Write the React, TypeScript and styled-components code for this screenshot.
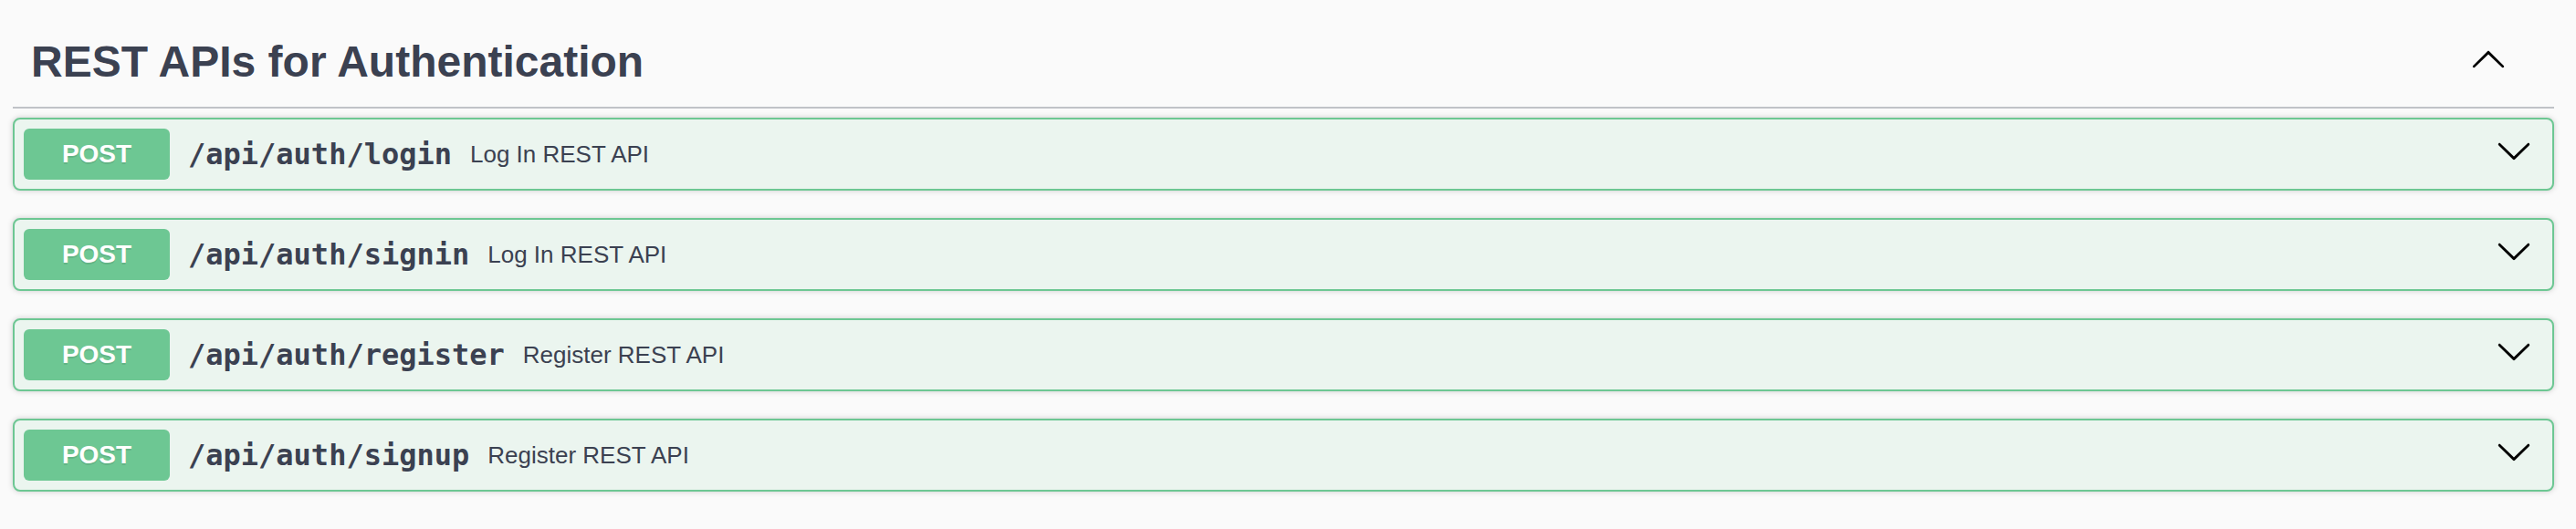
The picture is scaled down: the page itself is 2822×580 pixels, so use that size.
import React from 'react';
import styled, { createGlobalStyle } from 'styled-components';

const GlobalStyle = createGlobalStyle`
  body {
    margin: 0;
    background: #fafafa;
  }
`;

const Page = styled.div`
  padding: 20px 24px 0 14px;
`;

const TagHeader = styled.div`
  display: flex;
  align-items: center;
  padding: 20px 40px 22px 20px;
  border-bottom: 2px solid #c0c2c7;
  margin-bottom: 10px;
`;

const TagTitle = styled.h3`
  flex: 1;
  margin: 0;
  font-family: "Liberation Sans", Arial, sans-serif;
  font-size: 48px;
  font-weight: 700;
  line-height: normal;
  color: #3b4151;
`;

const ExpandButton = styled.button`
  display: flex;
  padding: 0;
  margin: 0 12px 7px 0;
  border: none;
  background: none;
  cursor: pointer;
`;

const Opblock = styled.div`
  border: 2px solid #6dc793;
  border-radius: 8px;
  background: #ebf5ef;
  box-shadow: 0 0 6px rgba(0, 0, 0, 0.19);
  margin-bottom: 30px;
`;

const Summary = styled.div`
  display: flex;
  align-items: center;
  padding: 10px;
  cursor: pointer;
`;

const Method = styled.span`
  min-width: 160px;
  padding: 12px 0;
  border-radius: 6px;
  background: #6dc793;
  color: #fff;
  text-align: center;
  font-family: "Liberation Sans", Arial, sans-serif;
  font-size: 28px;
  font-weight: 700;
  line-height: 32px;
  text-shadow: 0 2px 0 rgba(0, 0, 0, 0.1);
`;

const Path = styled.span`
  padding: 0 20px;
  font-family: "DejaVu Sans Mono", "Liberation Mono", monospace;
  font-size: 32px;
  font-weight: 600;
  color: #3b4151;
`;

const Description = styled.span`
  flex: 1;
  font-family: "Liberation Sans", Arial, sans-serif;
  font-size: 26px;
  color: #3b4151;
`;

const ArrowBox = styled.span`
  display: flex;
  margin: 0 12px 8px 0;
`;

const Chevron = ({ up }: { up?: boolean }) => (
  <svg width="40" height="40" viewBox="0 0 20 20" aria-hidden="true">
    {up ? (
      <path d="M17.418 14.908c.272.268.709.268.979 0s.271-.701 0-.969l-7.908-7.83c-.27-.268-.707-.268-.979 0l-7.908 7.83c-.27.268-.27.701 0 .969.271.268.709.268.979 0L10 7.767l7.418 7.141z" />
    ) : (
      <path d="M17.418 6.109c.272-.268.709-.268.979 0s.271.701 0 .969l-7.908 7.83c-.27.268-.707.268-.979 0l-7.908-7.83c-.27-.268-.27-.701 0-.969.271-.268.709-.268.979 0L10 13.25l7.418-7.141z" />
    )}
  </svg>
);

const operations = [
  { path: '/api/auth/login', summary: 'Log In REST API' },
  { path: '/api/auth/signin', summary: 'Log In REST API' },
  { path: '/api/auth/register', summary: 'Register REST API' },
  { path: '/api/auth/signup', summary: 'Register REST API' },
];

const App = () => (
  <Page>
    <GlobalStyle />
    <TagHeader>
      <TagTitle>REST APIs for Authentication</TagTitle>
      <ExpandButton aria-label="Collapse operation">
        <Chevron up />
      </ExpandButton>
    </TagHeader>
    {operations.map(op => (
      <Opblock key={op.path}>
        <Summary>
          <Method>POST</Method>
          <Path>{op.path}</Path>
          <Description>{op.summary}</Description>
          <ArrowBox>
            <Chevron />
          </ArrowBox>
        </Summary>
      </Opblock>
    ))}
  </Page>
);

export default App;
